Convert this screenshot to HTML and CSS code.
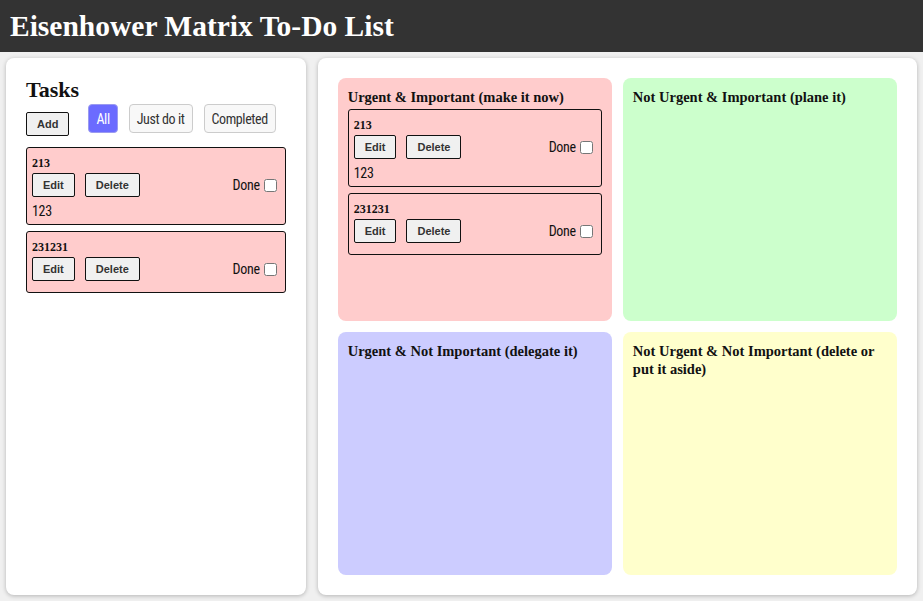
FILE: index.html
```html
<!DOCTYPE html>
<html lang="en">
<head>
<meta charset="utf-8">
<title>Eisenhower Matrix To-Do List</title>
<link rel="stylesheet" href="styles.css">
</head>
<body>
<header class="topbar">
  <h1 class="app-title">Eisenhower Matrix To-Do List</h1>
</header>
<main class="layout">
  <section class="panel tasks-panel">
    <h2 class="panel-title">Tasks</h2>
    <div class="toolbar">
      <button class="btn add-btn">Add</button>
      <div class="filters">
        <button class="filter active">All</button>
        <button class="filter">Just do it</button>
        <button class="filter">Completed</button>
      </div>
    </div>
    <div class="task-list">
      <div class="task">
        <div class="task-title">213</div>
        <div class="task-row">
          <button class="btn">Edit</button>
          <button class="btn">Delete</button>
          <label class="done">Done <input type="checkbox"></label>
        </div>
        <div class="task-desc">123</div>
      </div>
      <div class="task">
        <div class="task-title">231231</div>
        <div class="task-row">
          <button class="btn">Edit</button>
          <button class="btn">Delete</button>
          <label class="done">Done <input type="checkbox"></label>
        </div>
      </div>
    </div>
  </section>
  <section class="panel matrix-panel">
    <div class="matrix">
      <div class="quad q-red">
        <h3 class="quad-title">Urgent &amp; Important (make it now)</h3>
        <div class="task-list">
          <div class="task">
            <div class="task-title">213</div>
            <div class="task-row">
              <button class="btn">Edit</button>
              <button class="btn">Delete</button>
              <label class="done">Done <input type="checkbox"></label>
            </div>
            <div class="task-desc">123</div>
          </div>
          <div class="task">
            <div class="task-title">231231</div>
            <div class="task-row">
              <button class="btn">Edit</button>
              <button class="btn">Delete</button>
              <label class="done">Done <input type="checkbox"></label>
            </div>
          </div>
        </div>
      </div>
      <div class="quad q-green">
        <h3 class="quad-title">Not Urgent &amp; Important (plane it)</h3>
      </div>
      <div class="quad q-blue">
        <h3 class="quad-title">Urgent &amp; Not Important (delegate it)</h3>
      </div>
      <div class="quad q-yellow">
        <h3 class="quad-title">Not Urgent &amp; Not Important (delete or put it aside)</h3>
      </div>
    </div>
  </section>
</main>
</body>
</html>
```
FILE: styles.css
```css
* { box-sizing: border-box; }
html, body { margin: 0; padding: 0; }
body {
  background: #f0f0f0;
  font-family: Roboto, "Liberation Sans", sans-serif;
  font-stretch: 75%;
  color: #111;
  height: 601px;
  display: flex;
  flex-direction: column;
}
.topbar {
  background: #333;
  height: 52px;
  display: flex;
  align-items: center;
  padding: 0 10px;
}
.app-title {
  margin: 0;
  color: #fff;
  font-family: "Liberation Serif", serif;
  font-weight: bold;
  font-size: 29.5px;
}
.layout {
  flex: 1;
  display: grid;
  grid-template-columns: minmax(0, 1fr) minmax(0, 2fr);
  gap: 12px;
  padding: 6px;
  min-height: 0;
}
.panel {
  background: #fff;
  border-radius: 8px;
  box-shadow: 0 1px 4px rgba(0,0,0,0.25);
  padding: 20px;
  min-width: 0;
}
.panel-title {
  margin: 0;
  font-family: "Liberation Serif", serif;
  font-weight: bold;
  font-size: 22px;
  line-height: 24px;
}
.toolbar {
  display: flex;
  align-items: flex-start;
  margin-top: 2px;
  margin-bottom: 11px;
}
.add-btn { margin-top: 8px; margin-right: 19px; }
.filters { display: flex; gap: 11px; }
.filter {
  font-family: Roboto, "Liberation Sans", sans-serif;
  font-stretch: 75%;
  font-size: 14px;
  letter-spacing: -0.4px;
  height: 29px;
  padding: 0 7px;
  white-space: nowrap;
  border: 1px solid #ccc;
  border-radius: 4px;
  background: #f8f8f8;
  color: #333;
}
.filter.active {
  background: #6b6bff;
  border-color: #9a9af0;
  color: #fff;
}
.btn {
  font-family: "Liberation Sans", Arial, sans-serif;
  font-stretch: normal;
  font-weight: bold;
  font-size: 11px;
  line-height: 12px;
  padding: 5px 10px;
  height: 24px;
  border: 1px solid #111;
  border-radius: 2px;
  background: #f0f0f0;
  color: #333;
  white-space: nowrap;
}
.task-list { display: flex; flex-direction: column; gap: 6px; }
.task {
  background: #ffcccc;
  border: 1px solid #111;
  border-radius: 3px;
  padding: 5px;
}
.task-title {
  font-family: "Liberation Serif", serif;
  font-weight: bold;
  font-size: 12px;
  line-height: 20px;
}
.task-row {
  display: flex;
  align-items: center;
  gap: 10px;
  margin-bottom: 6px;
}
.done {
  margin-left: auto;
  font-size: 14px;
  letter-spacing: -0.3px;
  display: flex;
  align-items: center;
  white-space: nowrap;
}
.done input { margin: 0 3px 0 4px; width: 13px; height: 13px; }
.task-desc {
  font-size: 14px;
  line-height: 16px;
  letter-spacing: -0.3px;
}
.matrix {
  height: 100%;
  display: grid;
  grid-template-columns: minmax(0, 1fr) minmax(0, 1fr);
  grid-template-rows: minmax(0, 1fr) minmax(0, 1fr);
  gap: 11px;
}
.quad {
  border-radius: 8px;
  padding: 10px;
  min-width: 0;
}
.q-red { background: #ffcccc; }
.q-green { background: #ccffcc; }
.q-blue { background: #ccccff; }
.q-yellow { background: #ffffcc; }
.quad-title {
  margin: 0 0 3px 0;
  font-family: "Liberation Serif", serif;
  font-weight: bold;
  font-size: 14.5px;
  line-height: 18px;
}
```
